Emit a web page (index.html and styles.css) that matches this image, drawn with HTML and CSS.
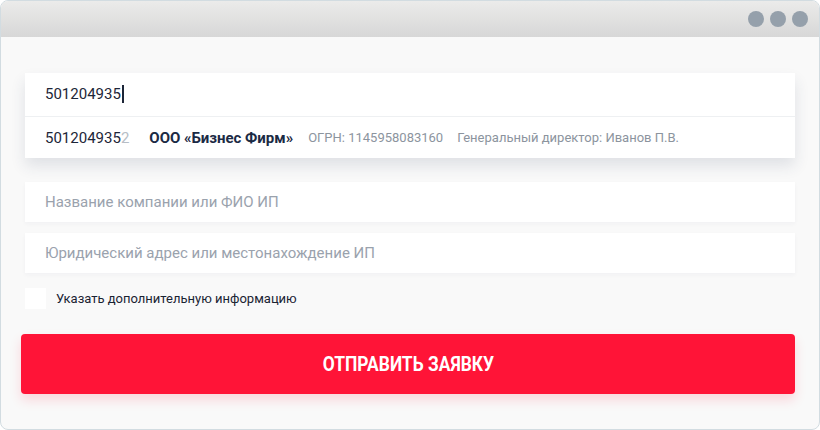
FILE: index.html
```html
<!DOCTYPE html>
<html lang="ru">
<head>
<meta charset="utf-8">
<link rel="stylesheet" href="styles.css">
</head>
<body>
<div class="window">
  <div class="titlebar">
    <span class="dot"></span><span class="dot"></span><span class="dot"></span>
  </div>
  <div class="content">
    <div class="field-group">
      <div class="field field-active">501204935<span class="caret"></span></div>
      <div class="suggestion">
        <span class="s-inn">501204935<span class="s-rest">2</span></span>
        <span class="s-name">ООО «Бизнес Фирм»</span>
        <span class="s-meta">ОГРН: 1145958083160</span>
        <span class="s-meta">Генеральный директор: Иванов П.В.</span>
      </div>
    </div>
    <div class="field placeholder">Название компании или ФИО ИП</div>
    <div class="field placeholder field-gap">Юридический адрес или местонахождение ИП</div>
    <label class="check-row">
      <span class="checkbox"></span>
      <span class="check-label">Указать дополнительную информацию</span>
    </label>
    <button class="submit"><span class="submit-text">ОТПРАВИТЬ ЗАЯВКУ</span></button>
  </div>
</div>
</body>
</html>
```
FILE: styles.css
```css
* { box-sizing: border-box; }
html, body { margin: 0; padding: 0; background: #ffffff; }
body { font-family: Roboto, "Noto Sans", sans-serif; }

.window {
  width: 820px;
  height: 430px;
  border: 1px solid #d2dce1;
  border-radius: 8px;
  overflow: hidden;
  background: #f9f9f9;
}

.titlebar {
  height: 36px;
  background: linear-gradient(#ebebea, #d7d7d7);
  display: flex;
  justify-content: flex-end;
  align-items: center;
  gap: 6px;
  padding-right: 11px;
}
.dot {
  width: 16px;
  height: 16px;
  border-radius: 50%;
  background: #95a0ab;
}

.content {
  padding: 36px 24px 0 24px;
  display: flex;
  flex-direction: column;
}

.field-group {
  background: #fff;
  box-shadow: 0 8px 14px rgba(40, 60, 90, 0.12);
  margin-bottom: 24px;
}

.field {
  height: 40px;
  background: #fff;
  display: flex;
  align-items: center;
  padding-left: 20px;
  font-size: 15px;
  color: #1d2638;
  box-shadow: 0 2px 4px rgba(40, 60, 90, 0.04);
}
.field-active {
  height: 44px;
  border-bottom: 1px solid #eef0f2;
  box-shadow: none;
  padding-bottom: 1px;
}
.caret {
  display: inline-block;
  width: 2px;
  height: 18px;
  background: #1d2638;
  margin-left: 1px;
}
.placeholder { color: #9aa2ad; }
.field-gap { margin-top: 11px; }

.suggestion {
  height: 41px;
  display: flex;
  align-items: center;
  padding-left: 20px;
}
.s-inn { font-size: 15px; color: #1d2638; margin-right: 20px; }
.s-rest { color: #b7bdc5; }
.s-name { font-size: 15px; font-weight: 700; color: #1b2a44; margin-right: 15px; }
.s-meta { font-size: 13px; color: #8c949e; margin-right: 14px; }

.check-row {
  display: flex;
  align-items: center;
  margin-top: 15px;
  height: 21px;
}
.checkbox {
  width: 21px;
  height: 21px;
  background: #fff;
  margin-right: 10px;
}
.check-label { font-size: 13px; color: #1a2333; }

.submit {
  margin: 25px 0 0 -4px;
  height: 60px;
  border: none;
  border-radius: 4px;
  background: #ff1437;
  color: #fff;
  box-shadow: 0 6px 12px rgba(255, 20, 55, 0.15);
  display: flex;
  align-items: center;
  justify-content: center;
  font-family: Roboto, sans-serif;
}
.submit-text {
  display: inline-block;
  font-size: 20px;
  font-weight: 700;
  transform: scaleX(0.87);
}
```
